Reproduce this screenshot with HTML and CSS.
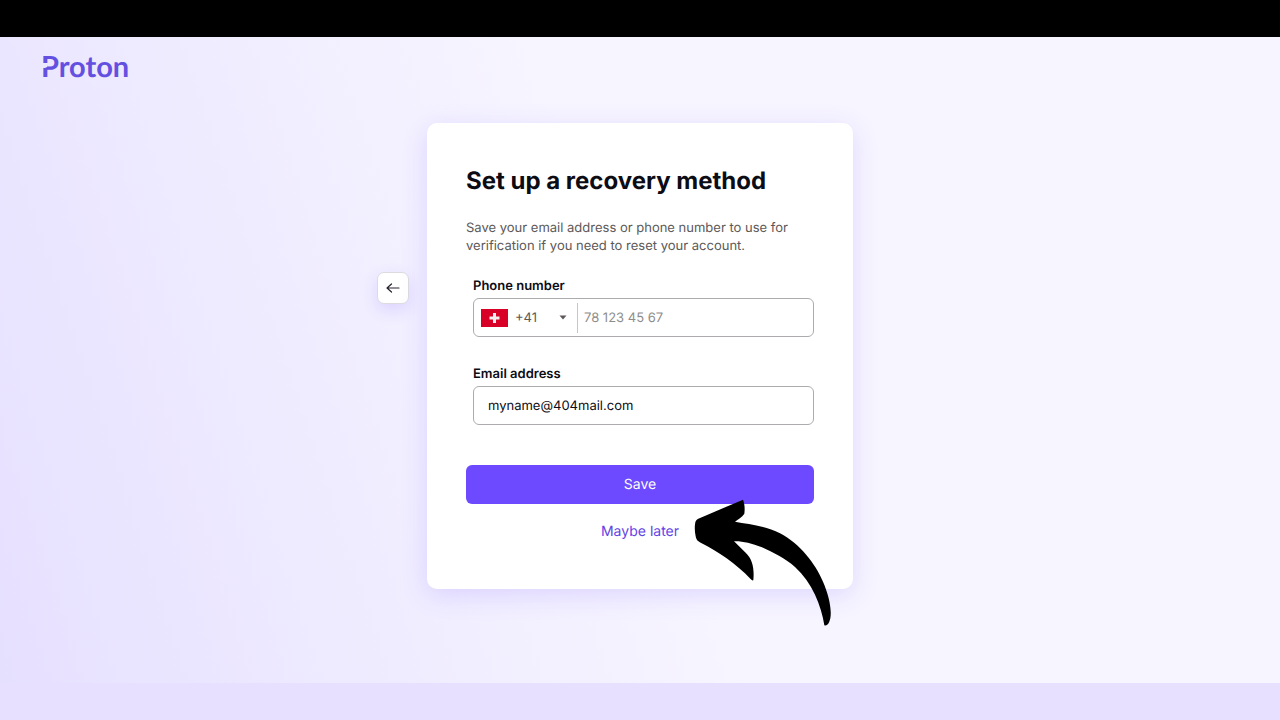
FILE: index.html
```html
<!DOCTYPE html>
<html lang="en">
<head>
<meta charset="utf-8">
<meta name="viewport" content="width=device-width, initial-scale=1">
<title>Set up a recovery method</title>
<link rel="stylesheet" href="styles.css">
</head>
<body>
<div class="band band-top"></div>
<div class="page">
  <header class="header"><a class="logo" href="#">Proton</a></header>
  <main class="main">
    <button class="back" type="button" aria-label="Back">
      <svg width="14" height="12" viewBox="0 0 14 12" fill="none" stroke="#26232f" stroke-width="1.2" stroke-linecap="round" stroke-linejoin="round"><path d="M5.500 2 1 6l4.500 4M1 6H13"/></svg>
    </button>
    <form class="card">
      <h1 class="title">Set up a recovery method</h1>
      <p class="intro">Save your email address or phone number to use for verification if you need to reset your account.</p>
      <div class="field">
        <label class="label" for="phone">Phone number</label>
        <div class="box phone">
          <svg class="flag" width="27" height="18" viewBox="0 0 27 18"><path fill="#d80027" d="M0 0h27v18H0z"/><path fill="#f0f0f0" d="M12 4h3v3.500h3.500v3H15V14h-3v-3.500H8.500v-3H12z"/></svg>
          <select class="code" aria-label="Country code"><option>+41</option></select>
          <svg class="caret" width="8" height="5" viewBox="0 0 8 5"><path fill="#5c5958" d="M.5.500h7L4 4.500z"/></svg>
          <input class="input number" id="phone" type="tel" placeholder="78 123 45 67">
        </div>
      </div>
      <div class="field">
        <label class="label" for="email">Email address</label>
        <div class="box"><input class="input email" id="email" type="email" value="myname@404mail.com"></div>
      </div>
      <button class="save" type="button">Save</button>
      <button class="later" type="button">Maybe later</button>
      <svg class="pointer" width="165" height="145" viewBox="0 0 495 435" aria-hidden="true"><path d="M189 29C194 41 195 56 193 71C186 82 174 88 165 95C205 102 257 108 300 130C359 160 406 221 429 275C446 314 456 357 451 385C447 402 441 409 433 406C424 347 397 279 345 231C316 205 279 187 246 172C214 160 187 153 162 154L197 188C219 209 223 238 220 270Q218 274 211 266C170 223 114 184 65 160C53 154 49 150 47 139C43 121 44 103 47 94C49 88 54 86 62 83Z"/></svg>
    </form>
  </main>
</div>
<div class="band band-bottom"></div>
</body>
</html>
```
FILE: styles.css
```css
* { box-sizing: border-box; }
body {
  margin: 0;
  min-height: 100vh;
  display: flex;
  flex-direction: column;
  font-family: Inter, "Liberation Sans", sans-serif;
  font-size: 13px;
  color: #0c0c14;
  text-rendering: geometricPrecision;
}
button, input, select { font: inherit; color: inherit; text-rendering: inherit; }
.band { height: 37px; flex: none; }
.band-top { background: #000; }
.band-bottom { background: #e7e1ff; }
.page {
  flex: 1;
  background: linear-gradient(72deg, #e6e0ff 0%, #f1eeff 32%, #f7f5ff 50%, #f7f5ff 100%);
}
.header { padding: 12px 41px 0; height: 86px; }
.logo {
  position: relative;
  display: inline-block;
  font-family: Lato, sans-serif;
  font-weight: 700;
  font-size: 29px;
  line-height: 36px;
  color: #6450e0;
  text-decoration: none;
}
.logo::after {
  content: "";
  position: absolute;
  left: 1px;
  top: 14px;
  width: 6px;
  height: 5px;
  border-bottom-right-radius: 4px;
  background: #ebe8fe;
}
.main {
  display: grid;
  grid-template-columns: 1fr minmax(0, 426px) 1fr;
  column-gap: 18px;
  padding-bottom: 94px;
}
.back {
  justify-self: end;
  display: flex;
  align-items: center;
  justify-content: center;
  width: 32px;
  height: 32px;
  margin-top: 149px;
  padding: 0;
  background: #fff;
  border: 1px solid #dedbe0;
  border-radius: 7px;
  box-shadow: 0 6px 16px rgba(109, 74, 255, .16);
}
.card {
  position: relative;
  display: flex;
  flex-direction: column;
  padding: 41px 39px 44px;
  background: #fff;
  border-radius: 10px;
  box-shadow: 0 6px 26px rgba(109, 74, 255, .17);
}
.title { margin: 0; font-size: 24px; line-height: 34px; font-weight: 700; }
.intro { margin: 21px 0 22px; line-height: 18px; color: #5c5958; }
.field { margin: 0 0 28px 7px; }
.label { display: block; line-height: 18px; margin-bottom: 3px; font-weight: 600; }
.box {
  display: flex;
  align-items: center;
  height: 39px;
  border: 1px solid #adabaf;
  border-radius: 6px;
}
.phone { padding-left: 7px; }
.code {
  appearance: none;
  width: 44px;
  margin-left: 7px;
  padding: 0;
  border: 0;
  background: none;
  color: #5c5958;
}
.input {
  flex: 1;
  min-width: 0;
  border: 0;
  background: none;
  outline: 0;
}
.number {
  height: 30px;
  margin-left: 10px;
  padding: 0 6px;
  border-left: 1px solid #c8c6ca;
}
.number::placeholder { color: #8f8d8a; opacity: 1; }
.email { padding: 0 14px; }
.save, .later { font-size: 14px; border: 0; padding: 0; }
.save {
  height: 39px;
  margin-top: 12px;
  border-radius: 6px;
  background: #6d4aff;
  color: #fff;
}
.later {
  align-self: center;
  height: 30px;
  margin-top: 12px;
  margin-bottom: -1px;
  background: none;
  color: #6243e6;
}
.pointer { position: absolute; right: 8px; bottom: -46px; }
```
